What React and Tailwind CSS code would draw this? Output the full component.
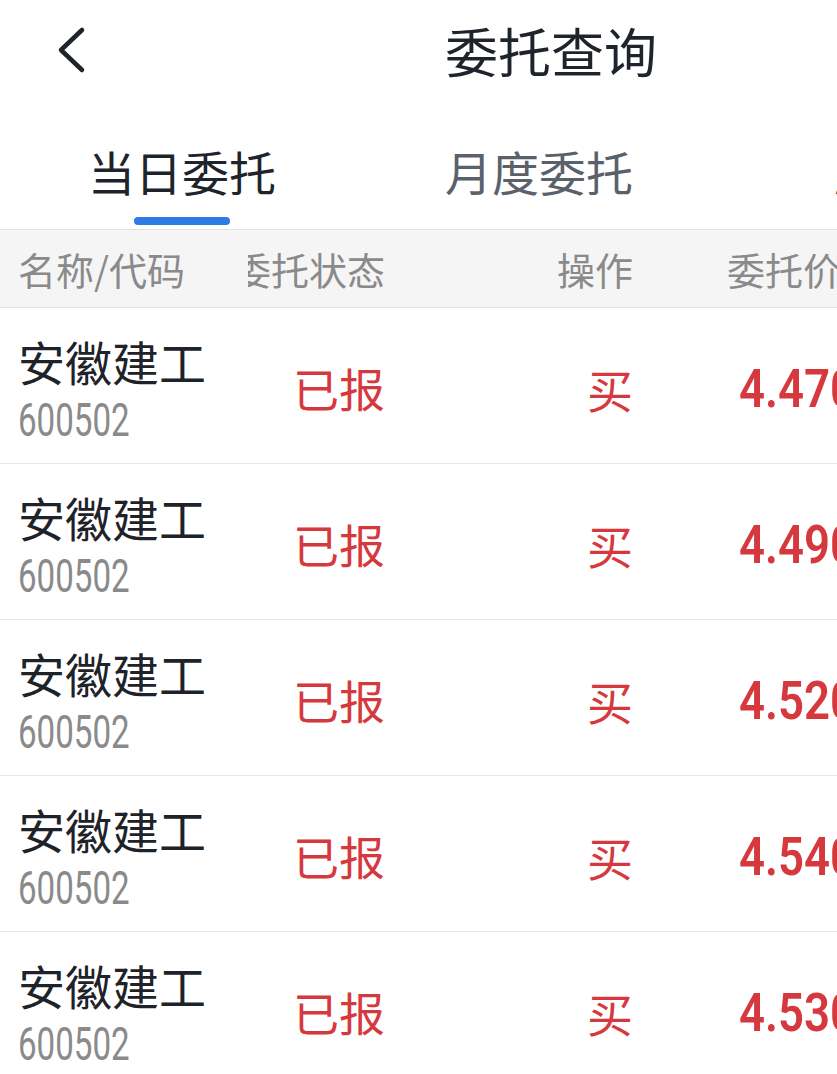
import React from "react";

const orders = [
  { name: "安徽建工", code: "600502", status: "已报", side: "买", price: "4.470" },
  { name: "安徽建工", code: "600502", status: "已报", side: "买", price: "4.490" },
  { name: "安徽建工", code: "600502", status: "已报", side: "买", price: "4.520" },
  { name: "安徽建工", code: "600502", status: "已报", side: "买", price: "4.540" },
  { name: "安徽建工", code: "600502", status: "已报", side: "买", price: "4.530" },
];

const cjk = { fontFamily: '"Noto Sans CJK SC", "Noto Sans", sans-serif' };
const num = { fontFamily: 'Roboto, "Noto Sans", sans-serif' };

const App = () => {
  return (
    <div className="w-[837px] h-[1074px] overflow-hidden bg-white" style={cjk}>
      {/* Top bar */}
      <div className="flex items-center h-[105px] pb-[5px]">
        <svg className="ml-[55px] w-[32px] h-[48px]" viewBox="0 0 32 48" fill="none">
          <polyline points="27,4 6,24 27,44" stroke="#1f232b" strokeWidth="4.5" strokeLinecap="round" strokeLinejoin="round" />
        </svg>
        <div className="ml-[358px] text-[53px] leading-none text-[#1f232b] whitespace-nowrap">委托查询</div>
      </div>

      {/* Tabs */}
      <div className="flex h-[124px] whitespace-nowrap overflow-hidden">
        <div className="ml-[88px] flex flex-col items-center w-[188px]">
          <div className="mt-[38px] text-[47px] leading-[56px] text-[#1f232b]">当日委托</div>
          <div className="mt-[18px] w-[96px] h-[8px] rounded-full bg-[#2f7be6]"></div>
        </div>
        <div className="ml-[169px] mt-[38px] text-[47px] leading-[56px] text-[#5b616b]">月度委托</div>
        <div className="ml-[201px] mt-[38px] text-[47px] leading-[56px] text-[#5b616b]">历史委托</div>
      </div>

      {/* Table header */}
      <div className="flex items-center h-[79px] bg-[#f5f5f5] border-y border-[#e2e2e2] text-[38px] text-[#8a8a8a] whitespace-nowrap overflow-hidden">
        <div className="w-[248px] shrink-0 pl-[18px]">名称/代码</div>
        <div className="w-[137px] shrink-0 flex justify-end overflow-hidden">
          <span className="shrink-0">委托状态</span>
        </div>
        <div className="w-[248px] shrink-0 flex justify-end">操作</div>
        <div className="shrink-0 pl-[94px]">委托价格</div>
      </div>

      {/* Rows */}
      {orders.map((o, i) => (
        <div key={i} className="flex h-[156px] border-b border-[#e6e6e6] whitespace-nowrap overflow-hidden">
          <div className="w-[248px] shrink-0 pl-[18px] pt-[25px]">
            <div className="text-[47px] leading-[56px] text-[#1e2229]">{o.name}</div>
            <div className="mt-[8px] h-[46px] text-[46px] leading-[46px] text-[#8a8a8a]" style={num}>
              <span className="inline-block origin-left scale-x-[0.72]">{o.code}</span>
            </div>
          </div>
          <div className="w-[137px] shrink-0 flex items-center justify-end pt-[4px] text-[46px] text-[#d6393d]">
            {o.status}
          </div>
          <div className="w-[248px] shrink-0 flex items-center justify-end pt-[6px] text-[46px] text-[#d6393d]">
            {o.side}
          </div>
          <div className="shrink-0 pl-[106px] flex items-center pt-[8px] text-[53px] font-semibold text-[#d6393d]" style={num}>
            <span className="inline-block origin-left scale-x-[0.86]">{o.price}</span>
          </div>
        </div>
      ))}
    </div>
  );
};

export default App;
